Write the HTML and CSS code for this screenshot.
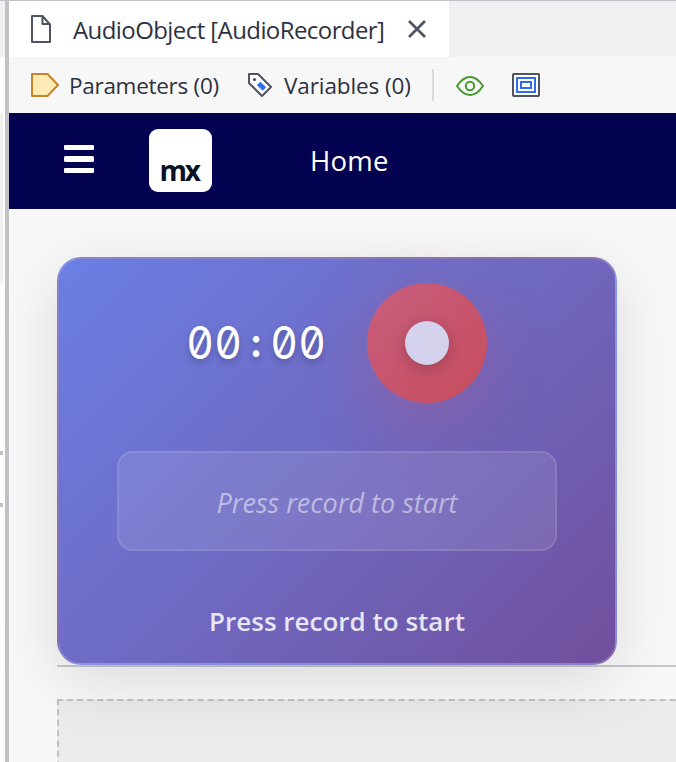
FILE: index.html
```html
<!DOCTYPE html>
<html lang="en">
<head>
<meta charset="utf-8">
<title>AudioObject [AudioRecorder]</title>
<link rel="stylesheet" href="styles.css">
</head>
<body>
<div class="app">
  <aside class="edge">
    <div class="edge-tab"></div>
    <div class="edge-tools"></div>
    <div class="edge-list"></div>
    <div class="tick"></div>
    <div class="tick tick-next"></div>
  </aside>
  <div class="editor">
    <div class="tabs">
      <div class="tab">
        <svg class="file-icon" width="22" height="30" viewBox="0 0 22 30" fill="none" stroke="#505361" stroke-width="2" stroke-linejoin="round"><path d="M2 2V28H20V10.5L12.5 2ZM12.5 2V10H20"/></svg>
        <span class="label tab-title">AudioObject [AudioRecorder]</span>
        <svg class="close" width="20" height="20" viewBox="0 0 20 20" stroke="#505361" stroke-width="2.7"><path d="M2 2 18 18M18 2 2 18"/></svg>
      </div>
    </div>
    <div class="toolbar">
      <svg class="param-icon" width="30" height="26" viewBox="0 0 30 26" fill="#fdeab5" stroke="#c5832b" stroke-width="2" stroke-linejoin="round"><path d="M2 2H17.5L28 13 17.5 24H2Z"/></svg>
      <span class="label params">Parameters (0)</span>
      <svg class="tag-icon" width="26" height="26" viewBox="0 0 26 26"><path d="M2 2H11L24 15 15 24 2 11Z" fill="#fff" stroke="#505361" stroke-width="2" stroke-linejoin="round"/><circle cx="7.5" cy="7.5" r="1.6" fill="#505361"/><path d="M11.5 11.5 17.5 17" stroke="#2f6eea" stroke-width="5"/></svg>
      <span class="label vars">Variables (0)</span>
      <i class="divider"></i>
      <svg class="eye" width="30" height="22" viewBox="0 0 30 22" fill="none" stroke="#459a2f" stroke-width="2"><path d="M2 11Q8 2 15 2T28 11Q22 20 15 20T2 11Z"/><circle cx="15" cy="11" r="4.2"/></svg>
      <svg class="frame" width="28" height="24" viewBox="0 0 28 24" fill="none" stroke-width="2"><rect x="1" y="1" width="26" height="22" rx=".7" fill="#fff" stroke="#505361"/><rect x="5" y="5" width="18" height="14" stroke="#2f6eea"/><rect x="9" y="9" width="10" height="6" stroke="#2f6eea"/></svg>
    </div>
    <header class="nav">
      <svg class="menu" width="30" height="28" viewBox="0 0 30 28" fill="#fff"><rect width="30" height="5" rx="1"/><rect y="11" width="30" height="6" rx="1.5"/><rect y="23" width="30" height="5" rx="1"/></svg>
      <div class="logo"><span>mx</span></div>
      <span class="label home">Home</span>
    </header>
    <main class="canvas">
      <section class="row">
        <div class="recorder">
          <div class="controls">
            <div class="timer"><span>0</span><span>0</span><span class="colon">:</span><span>0</span><span>0</span></div>
            <div class="record"><i></i></div>
          </div>
          <div class="preview"><span class="label hint">Press record to start</span></div>
          <div class="label status">Press record to start</div>
        </div>
      </section>
      <div class="dropzone"></div>
    </main>
  </div>
</div>
</body>
</html>
```
FILE: styles.css
```css
* { box-sizing: border-box; }
body { margin: 0; overflow: hidden; font-family: "Open Sans", "Noto Sans", sans-serif; color: #2d3142; }
svg { display: block; flex: none; }
.label { white-space: nowrap; flex: none; }
.app { display: flex; width: 676px; height: 762px; overflow: hidden; border-top: 1px solid #c1c2c7; }
.edge { width: 9px; flex: none; background: #fff; border-right: 4px solid #c1c2c7; }
.edge-tab { height: 56px; background: #f0f0f0; }
.edge-tools { height: 56px; }
.edge-list { width: 3px; height: 170px; background: #f1f1f1; }
.tick { width: 3px; height: 4px; margin-top: 168px; background: #c1c2c7; }
.tick-next { margin-top: 48px; }
.editor { flex: 1; min-width: 0; }
.tabs { height: 56px; background: #f0f0f0; }
.tab { display: flex; align-items: center; width: 440px; height: 56px; padding-left: 21px; background: #fff; }
.tab-title { width: 311px; margin-left: 21px; font-size: 24px; line-height: 34px; letter-spacing: -.58px; position: relative; top: 1px; }
.close { margin-left: 23px; }
.toolbar { display: flex; align-items: center; height: 56px; padding-left: 21px; background: #f7f7f7; }
.params { width: 150px; margin-left: 9px; font-size: 22.5px; letter-spacing: -.28px; }
.tag-icon { margin-left: 28px; }
.vars { width: 128px; margin-left: 11px; font-size: 22.5px; letter-spacing: -.1px; }
.divider { width: 2px; height: 32px; margin-left: 20px; background: #d9d9da; }
.eye { margin-left: 21px; position: relative; top: 1px; }
.frame { margin-left: 27px; }
.nav { display: flex; align-items: center; height: 96px; padding-left: 55px; background: #020251; color: #fff; }
.menu { position: relative; top: -2px; }
.logo { display: flex; align-items: flex-end; justify-content: center; width: 63px; height: 63px; margin: -2px 0 0 55px; border-radius: 9px; background: #fff; color: #0a1325; font: 700 28px/44px "Open Sans", sans-serif; letter-spacing: -2.4px; }
.logo span { padding-right: 3px; }
.home { margin: -2px 0 0 98px; font-size: 27.5px; letter-spacing: .2px; }
.canvas { height: 553px; padding: 48px 0 0 48px; background: #f8f8f8; }
.row { width: 700px; height: 410px; border-bottom: 2px solid #c8c8cc; }
.recorder { width: 560px; height: 408px; padding: 24px 58px 0; border: 2px solid rgba(255,255,255,.18); border-radius: 24px; background: linear-gradient(135deg, #6b7fe4, #6f69c1 50%, #704f9d); box-shadow: 0 16px 64px rgba(0,0,0,.12); position: relative; }
.controls { display: flex; align-items: center; height: 120px; padding-left: 69px; }
.timer { display: flex; width: 140px; color: #fff; font: 400 45px/60px Inter, sans-serif; font-feature-settings: "zero"; text-shadow: 0 4px 8px rgba(0,0,0,.22); }
.timer span { display: flex; flex: none; justify-content: center; width: 28px; transform: scaleX(.94); }
.timer .colon { font-weight: 700; font-size: 40px; }
.record { display: flex; align-items: center; justify-content: center; width: 120px; height: 120px; margin-left: 41px; border-radius: 50%; background: linear-gradient(135deg, #c85e7e, #c74c5c); box-shadow: 0 16px 64px rgba(220,75,90,.25); }
.record i { width: 44px; height: 44px; border-radius: 50%; background: #d4d2ed; box-shadow: 0 4px 16px rgba(0,0,0,.2); }
.preview { display: flex; align-items: center; justify-content: center; height: 100px; margin: 48px 0 0; border: 2px solid rgba(255,255,255,.1); border-radius: 16px; background: rgba(255,255,255,.1); }
.hint { margin-top: 3px; font-size: 27px; font-style: italic; color: rgba(255,255,255,.5); }
.status { margin-top: 51px; text-align: center; font-size: 26px; line-height: 38px; font-weight: 600; color: rgba(255,255,255,.85); }
.dropzone { width: 900px; height: 120px; margin-top: 32px; border: 2px dashed #c1c2c7; background: #ebebeb; }
```
